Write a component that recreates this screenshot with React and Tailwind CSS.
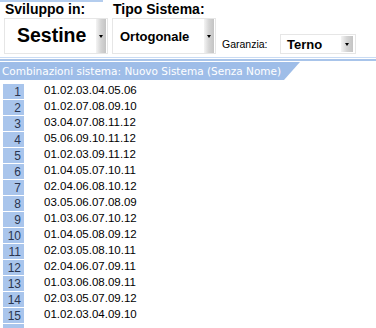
const rows = [
  '01.02.03.04.05.06',
  '01.02.07.08.09.10',
  '03.04.07.08.11.12',
  '05.06.09.10.11.12',
  '01.02.03.09.11.12',
  '01.04.05.07.10.11',
  '02.04.06.08.10.12',
  '03.05.06.07.08.09',
  '01.03.06.07.10.12',
  '01.04.05.08.09.12',
  '02.03.05.08.10.11',
  '02.04.06.07.09.11',
  '01.03.06.08.09.11',
  '02.03.05.07.09.12',
  '01.02.03.04.09.10',
];

function DropButton({ className }) {
  return (
    <div
      className={`flex items-center justify-center bg-gradient-to-r from-[#f4f4f4] via-[#d4d4d4] to-[#c4c4c4] ${className}`}
    >
      <span className="h-0 w-0 border-x-[2.5px] border-t-[3px] border-x-transparent border-t-black" />
    </div>
  );
}

export default function App() {
  return (
    <div
      className="h-[328px] w-[376px] overflow-hidden bg-white text-black"
      style={{ fontFamily: '"Liberation Sans", Arial, sans-serif' }}
    >
      {/* Selectors */}
      <div className="flex h-[57px]">
        <div className="ml-[4px] flex w-[104px] flex-col">
          <div className="-ml-[4px] h-[2px] w-[103px] bg-[#b4cdee]" />
          <p className="ml-[1px] h-[16px] text-[14px] font-bold leading-[14px]">Sviluppo in:</p>
          <div className="flex h-[36px] items-center border border-[#e6e6e6] pl-[12px] pr-[1px]">
            <span className="flex-1 text-[19.5px] font-bold leading-none">Sestine</span>
            <DropButton className="h-[34px] w-[10px]" />
          </div>
        </div>
        <div className="ml-[4px] flex w-[104px] flex-col">
          <p className="mt-[2px] ml-[1px] h-[16px] text-[14px] font-bold leading-[14px]">Tipo Sistema:</p>
          <div className="flex h-[36px] items-center border border-[#e6e6e6] pl-[7px] pr-[1px]">
            <span className="flex-1 pt-[1px] text-[13px] font-bold leading-none">Ortogonale</span>
            <DropButton className="h-[34px] w-[10px]" />
          </div>
        </div>
        <div className="flex items-end pb-[3px]">
          <span className="ml-[6px] mb-[5px] w-[58px] text-[10.5px] leading-none">Garanzia:</span>
          <div className="flex h-[20px] w-[76px] items-center border border-[#e6e6e6] pl-[6px] pr-[2px]">
            <span className="flex-1 text-[13px] font-bold leading-none">Terno</span>
            <DropButton className="h-[16px] w-[12px]" />
          </div>
        </div>
      </div>

      {/* Divider */}
      <div className="h-[1px] bg-[#c9dbf3]" />
      <div className="h-[1px]" />
      <div className="h-[2px] bg-[#a8c4ea]" />
      <div className="h-[1px]" />

      {/* Header */}
      <div className="flex h-[18px] w-[300px] items-center bg-[#9ebde8] pl-[2px] [clip-path:polygon(0_0,100%_0,284px_100%,0_100%)]">
        <span
          className="text-[10.5px] leading-none text-white"
          style={{ fontFamily: '"DejaVu Sans", Verdana, sans-serif' }}
        >
          Combinazioni sistema: Nuovo Sistema (Senza Nome)
        </span>
      </div>

      {/* Rows */}
      <div className="mt-[4px] flex flex-col">
        {rows.map((r, i) => (
          <div key={i} className="flex h-[16px] items-start">
            <div className="ml-[3px] flex h-[15px] w-[21px] items-center justify-end bg-[#a9c5ec] pr-[3px] text-[12px] leading-none text-[#2a3550]">
              {i + 1}
            </div>
            <span className="ml-[20px] pt-[1px] text-[11.5px] leading-none">{r}</span>
          </div>
        ))}
        <div className="ml-[3px] h-[15px] w-[21px] bg-[#a9c5ec]" />
      </div>
    </div>
  );
}
